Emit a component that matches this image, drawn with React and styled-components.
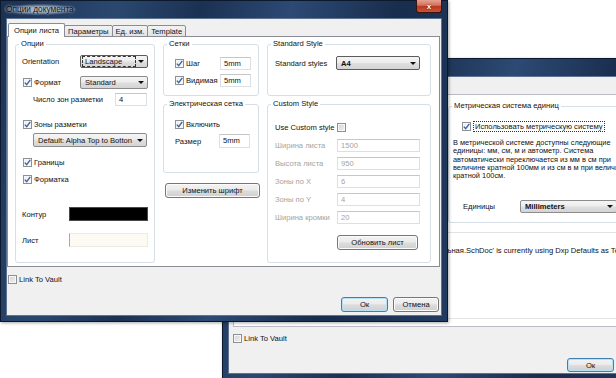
import React from "react";
import styled, { createGlobalStyle } from "styled-components";

const GlobalStyle = createGlobalStyle`
  html, body { margin: 0; padding: 0; background: #fff; }
  body {
    font-family: "Liberation Sans", Arial, sans-serif;
    font-size: 7.6px;
    color: #111;
  }
  * { box-sizing: border-box; }
`;

const Desktop = styled.div`
  position: relative;
  width: 616px;
  height: 378px;
  overflow: hidden;
  background: #fff;
`;

// окно на рабочем столе — место окна и есть содержимое
const Window = styled.div`
  position: absolute;
  left: ${(p) => p.$x}px;
  top: ${(p) => p.$y}px;
  width: ${(p) => p.$w}px;
  height: ${(p) => p.$h}px;
  isolation: isolate;
  display: flex;
  flex-direction: column;
  padding: 0 5px 5px;
  border: 1px solid #0c182b;
  background: linear-gradient(
    105deg,
    #1b3153 0%,
    #2a486f 22%,
    #1b3152 38%,
    #2c4a74 55%,
    #192d4d 75%,
    #223b60 100%
  );
  box-shadow: 1px 1px 3px rgba(0, 0, 0, 0.35);
`;

const TitleBar = styled.div`
  height: 17px;
  margin: 0 -5px;
  padding-left: 3px;
  display: flex;
  align-items: flex-start;
`;

const TitleText = styled.span`
  margin-top: 3px;
  font-size: 8.3px;
  line-height: 11px;
  color: #101010;
  padding: 0 2px;
  background: radial-gradient(ellipse at center, rgba(200, 210, 225, 0.75) 30%, rgba(200, 210, 225, 0) 75%);
  text-shadow: 0 0 3px rgba(230, 236, 245, 0.9);
`;

const CloseButton = styled.span`
  margin: -1px 5px 0 auto;
  width: 26px;
  height: 13px;
  border: 1px solid #3a1410;
  border-top: none;
  border-radius: 0 0 3px 3px;
  background: linear-gradient(#e6a293 0%, #d1715c 45%, #b7381f 50%, #c9533a 100%);
  color: #fff;
  font-weight: 700;
  font-size: 8px;
  display: flex;
  align-items: center;
  justify-content: center;
  text-shadow: 0 0 2px #4a0f05;
`;

const Client = styled.div`
  flex: 1;
  display: flex;
  flex-direction: column;
  padding-right: 1px;
  background: #f0f0f0;
  border: 1px solid #5e7391;
`;

const TabStrip = styled.div`
  height: 18px;
  margin-bottom: -1px;
  padding-left: 1px;
  display: flex;
  align-items: flex-end;
  position: relative;
  z-index: 1;
`;

const Tab = styled.div`
  height: ${(p) => (p.$active ? 14 : 12)}px;
  padding: 0 ${(p) => (p.$active ? 5 : 3)}px;
  margin-right: -1px;
  display: flex;
  align-items: center;
  border: 1px solid #898c95;
  border-bottom: ${(p) => (p.$active ? "none" : "1px solid #898c95")};
  border-radius: 2px 2px 0 0;
  background: ${(p) => (p.$active ? "#fff" : "linear-gradient(#f3f3f3, #e2e2e2)")};
  position: relative;
  z-index: ${(p) => (p.$active ? 2 : 1)};
  white-space: nowrap;
`;

const Panel = styled.div`
  height: 231px;
  display: grid;
  grid-template-columns: 140px 96px 164px;
  column-gap: 8px;
  align-items: start;
  padding: 2px 7px 0;
  background: #fff;
  border: 1px solid #898c95;
`;

const Column = styled.div`
  display: flex;
  flex-direction: column;
`;

const Group = styled.fieldset`
  margin: ${(p) => p.$mt || 0}px 0 0;
  padding: 0;
  min-width: 0;
  height: ${(p) => p.$h}px;
  border: 1px solid #d5dfe5;
  border-radius: 3px;
`;

const Legend = styled.legend`
  margin-left: 3px;
  padding: 0 2px;
  line-height: 10px;
  white-space: nowrap;
`;

const GroupBody = styled.div`
  display: flex;
  flex-direction: column;
  padding-left: ${(p) => p.$pl}px;
`;

const Row = styled.div`
  display: flex;
  align-items: center;
  height: ${(p) => p.$h || 13}px;
  margin-top: ${(p) => p.$mt || 0}px;
  padding-left: ${(p) => p.$pl || 0}px;
  white-space: nowrap;
`;

const Label = styled.span`
  width: ${(p) => (p.$w ? `${p.$w}px` : "auto")};
  flex-shrink: 0;
  display: flex;
  align-items: center;
  gap: 2px;
  color: ${(p) => (p.$disabled ? "#a3a3a3" : "inherit")};
`;

const FocusText = styled.span`
  padding: 0 1px;
  line-height: 9px;
  border: 1px dotted #333;
`;

const CheckBox = styled.span`
  width: 9px;
  height: 9px;
  flex-shrink: 0;
  margin-left: ${(p) => p.$ml || 0}px;
  display: inline-flex;
  align-items: center;
  justify-content: center;
  border: 1px solid #8e9092;
  background: ${(p) =>
    p.$checked ? "linear-gradient(135deg, #e9ebee, #fff)" : "linear-gradient(135deg, #cfd2d6, #f3f3f3)"};
  box-shadow: inset 0 0 0 1px #f7f7f7;
`;

const Check = ({ checked, ml }) => (
  <CheckBox $checked={checked} $ml={ml}>
    {checked && (
      <svg width="7" height="7" viewBox="0 0 7 7">
        <path d="M0.8 3.6 L2.7 5.7 L6.3 0.9" fill="none" stroke="#3e64a6" strokeWidth="1.4" />
      </svg>
    )}
  </CheckBox>
);

const Combo = styled.div`
  width: ${(p) => p.$w}px;
  height: ${(p) => p.$h || 13}px;
  flex-shrink: 0;
  margin-left: ${(p) => p.$ml || 0}px;
  display: flex;
  align-items: center;
  padding: 0 3px 0 1px;
  border: 1px solid ${(p) => (p.$dark ? "#5c5c5c" : "#8c8c8c")};
  border-radius: 2px;
  background: linear-gradient(#f5f5f5 0%, #ececec 48%, #dfdfdf 52%, #d4d4d4 100%);
  font-weight: ${(p) => (p.$bold ? 700 : 400)};
`;

const ComboValue = styled.span`
  flex: 1;
  min-width: 0;
  padding: 0 2px;
  line-height: 9px;
  border: 1px dashed ${(p) => (p.$focus ? "#333" : "transparent")};
  overflow: hidden;
  white-space: nowrap;
`;

const ComboArrow = styled.span`
  width: 0;
  height: 0;
  margin-left: 2px;
  border-left: 3px solid transparent;
  border-right: 3px solid transparent;
  border-top: 3px solid #111;
`;

const Field = styled.div`
  width: ${(p) => p.$w}px;
  height: ${(p) => p.$h || 13}px;
  flex-shrink: 0;
  padding: 0 3px;
  line-height: ${(p) => (p.$h || 13) - 2}px;
  background: #fff;
  border: 1px solid #dcdfe3;
  border-top-color: #c3c6cb;
  color: ${(p) => (p.$disabled ? "#a3a3a3" : "inherit")};
`;

const Swatch = styled.div`
  width: 79px;
  height: 14px;
  flex-shrink: 0;
  background: ${(p) => p.$color};
  border: 1px solid ${(p) => p.$border};
  border-left-color: ${(p) => p.$edge || p.$border};
`;

const Button = styled.button`
  width: ${(p) => p.$w}px;
  height: ${(p) => p.$h || 15}px;
  margin: ${(p) => p.$mt || 0}px 0 0 ${(p) => p.$ml || 0}px;
  padding: 0;
  font: inherit;
  color: #111;
  border: 1px solid ${(p) => (p.$default ? "#3d7fb3" : "#767676")};
  border-radius: 3px;
  background: linear-gradient(#f3f3f3 0%, #ebebeb 46%, #dddddd 52%, #cfcfcf 100%);
  box-shadow: inset 0 0 0 1px ${(p) => (p.$default ? "#b9e1f6" : "#fbfbfb")};
`;

const Footer = styled.div`
  display: flex;
  flex-direction: column;
`;

const ButtonRow = styled.div`
  display: flex;
  justify-content: flex-end;
  gap: 5px;
  margin-top: ${(p) => p.$mt}px;
  padding-right: ${(p) => p.$pr || 1}px;
`;

/* задний диалог */
const BackPanel = styled.div`
  height: 233px;
  margin-left: 4px;
  display: grid;
  grid-template-columns: 214px 1fr;
  background: #fff;
  border: 1px solid #b9bcc2;
`;

const MainColumn = styled.div`
  height: 224px;
  display: flex;
  flex-direction: column;
  padding-top: 6px;
  border-bottom: 1px solid #e4e4e4;
  overflow: hidden;
`;

const Paragraph = styled.p`
  margin: 7px 0 0;
  padding-left: 4px;
  font-size: 7.4px;
  line-height: 8.3px;
  white-space: nowrap;
`;

const Divider = styled.div`
  margin-top: 9px;
  border-top: 1px solid #e2e2e2;
`;

const Note = styled.div`
  margin: 13px 0 0 -5px;
  line-height: 10px;
  white-space: nowrap;
`;

const tabs = ["Опции листа", "Параметры", "Ед. изм.", "Template"];

const Tabs = ({ active }) => (
  <TabStrip>
    {tabs.map((t) => (
      <Tab key={t} $active={t === active}>
        {t}
      </Tab>
    ))}
  </TabStrip>
);

const customRows = [
  ["Ширина листа", "1500", 6],
  ["Высота листа", "950", 5],
  ["Зоны по X", "6", 5],
  ["Зоны по Y", "4", 5],
  ["Ширина кромки", "20", 5],
];

// задний диалог почти весь закрыт передним: видна только правая часть и низ
const BackDialog = () => (
  <Window $x={222} $y={58} $w={452} $h={322}>
    <TitleBar />
    <Client>
      <TabStrip />
      <BackPanel>
        <div />
        <MainColumn>
          <Group $h={122}>
            <Legend>Метрическая система единиц</Legend>
            <GroupBody $pl={0}>
              <Row $h={12} $mt={9} $pl={13}>
                <Label>
                  <Check checked />
                  <FocusText>Использовать метрическую систему</FocusText>
                </Label>
              </Row>
              <Paragraph>
                В метрической системе доступны следующие
                <br />
                единицы: мм, см, м и автометр. Система
                <br />
                автоматически переключается из мм в см при
                <br />
                величине кратной 100мм и из см в м при величине
                <br />
                кратной 100см.
              </Paragraph>
              <Row $mt={20} $pl={14}>
                <Label $w={57}>Единицы</Label>
                <Combo $w={97} $bold>
                  <ComboValue>Millimeters</ComboValue>
                  <ComboArrow />
                </Combo>
              </Row>
            </GroupBody>
          </Group>
          <Divider />
          <Note>льная.SchDoc' is currently using Dxp Defaults as Template</Note>
        </MainColumn>
      </BackPanel>
      <Footer>
        <Row $h={10} $mt={6} $pl={4}>
          <Label>
            <Check />
            Link To Vault
          </Label>
        </Row>
        <ButtonRow $mt={15} $pr={52}>
          <Button $w={47} $h={14} $default>
            Ок
          </Button>
        </ButtonRow>
      </Footer>
    </Client>
  </Window>
);

const FrontDialog = () => (
  <Window $x={0} $y={0} $w={448} $h={322}>
    <TitleBar>
      <TitleText>Опции документа</TitleText>
      <CloseButton>x</CloseButton>
    </TitleBar>
    <Client>
      <Tabs active="Опции листа" />
      <Panel>
        <Group $h={224}>
          <Legend>Опции</Legend>
          <GroupBody $pl={6}>
            <Row $mt={6}>
              <Label $w={58}>Orientation</Label>
              <Combo $w={68} $dark>
                <ComboValue $focus>Landscape</ComboValue>
                <ComboArrow />
              </Combo>
            </Row>
            <Row $mt={8}>
              <Label $w={58}>
                <Check checked ml={1} />
                Формат
              </Label>
              <Combo $w={68}>
                <ComboValue>Standard</ComboValue>
                <ComboArrow />
              </Combo>
            </Row>
            <Row $mt={4} $pl={11}>
              <Label $w={82}>Число зон разметки</Label>
              <Field $w={32}>4</Field>
            </Row>
            <Row $mt={12}>
              <Label>
                <Check checked ml={1} />
                Зоны разметки
              </Label>
            </Row>
            <Row $h={14} $mt={2}>
              <Combo $w={114} $h={14} $ml={11}>
                <ComboValue>Default: Alpha Top to Botton</ComboValue>
                <ComboArrow />
              </Combo>
            </Row>
            <Row $mt={9}>
              <Label>
                <Check checked ml={1} />
                Границы
              </Label>
            </Row>
            <Row $mt={4}>
              <Label>
                <Check checked ml={1} />
                Форматка
              </Label>
            </Row>
            <Row $h={14} $mt={21}>
              <Label $w={47}>Контур</Label>
              <Swatch $color="#000" $border="#4a4a4a" />
            </Row>
            <Row $h={14} $mt={12}>
              <Label $w={47}>Лист</Label>
              <Swatch $color="#fdf9f3" $border="#eeeae4" $edge="#a8a8a8" />
            </Row>
          </GroupBody>
        </Group>

        <Column>
          <Group $h={57}>
            <Legend>Сетки</Legend>
            <GroupBody $pl={11}>
              <Row $mt={8}>
                <Label $w={45}>
                  <Check checked />
                  Шаг
                </Label>
                <Field $w={31}>5mm</Field>
              </Row>
              <Row $mt={4}>
                <Label $w={45}>
                  <Check checked />
                  Видимая
                </Label>
                <Field $w={31}>5mm</Field>
              </Row>
            </GroupBody>
          </Group>
          <Group $h={74} $mt={3}>
            <Legend>Электрическая сетка</Legend>
            <GroupBody $pl={11}>
              <Row $mt={9}>
                <Label>
                  <Check checked />
                  Включить
                </Label>
              </Row>
              <Row $h={14} $mt={3}>
                <Label $w={44}>Размер</Label>
                <Field $w={31} $h={14}>
                  5mm
                </Field>
              </Row>
            </GroupBody>
          </Group>
          <Button $w={95} $mt={10} $ml={2}>
            Изменить шрифт
          </Button>
        </Column>

        <Column>
          <Group $h={57}>
            <Legend>Standard Style</Legend>
            <GroupBody $pl={7}>
              <Row $h={14} $mt={7}>
                <Label $w={61}>Standard styles</Label>
                <Combo $w={84} $h={14} $dark $bold>
                  <ComboValue>A4</ComboValue>
                  <ComboArrow />
                </Combo>
              </Row>
            </GroupBody>
          </Group>
          <Group $h={164} $mt={3}>
            <Legend>Custom Style</Legend>
            <GroupBody $pl={7}>
              <Row $h={12} $mt={12}>
                <Label $w={62}>Use Custom style</Label>
                <Check />
              </Row>
              {customRows.map(([label, value, mt]) => (
                <Row key={label} $mt={mt}>
                  <Label $w={62} $disabled>
                    {label}
                  </Label>
                  <Field $w={83} $disabled>
                    {value}
                  </Field>
                </Row>
              ))}
              <Button $w={81} $mt={11} $ml={62}>
                Обновить лист
              </Button>
            </GroupBody>
          </Group>
        </Column>
      </Panel>
      <Footer>
        <Row $h={10} $mt={7} $pl={1}>
          <Label>
            <Check />
            Link To Vault
          </Label>
        </Row>
        <ButtonRow $mt={13}>
          <Button $w={47} $h={15} $default>
            Ок
          </Button>
          <Button $w={46} $h={15}>
            Отмена
          </Button>
        </ButtonRow>
      </Footer>
    </Client>
  </Window>
);

export default function App() {
  return (
    <>
      <GlobalStyle />
      <Desktop>
        <BackDialog />
        <FrontDialog />
      </Desktop>
    </>
  );
}
